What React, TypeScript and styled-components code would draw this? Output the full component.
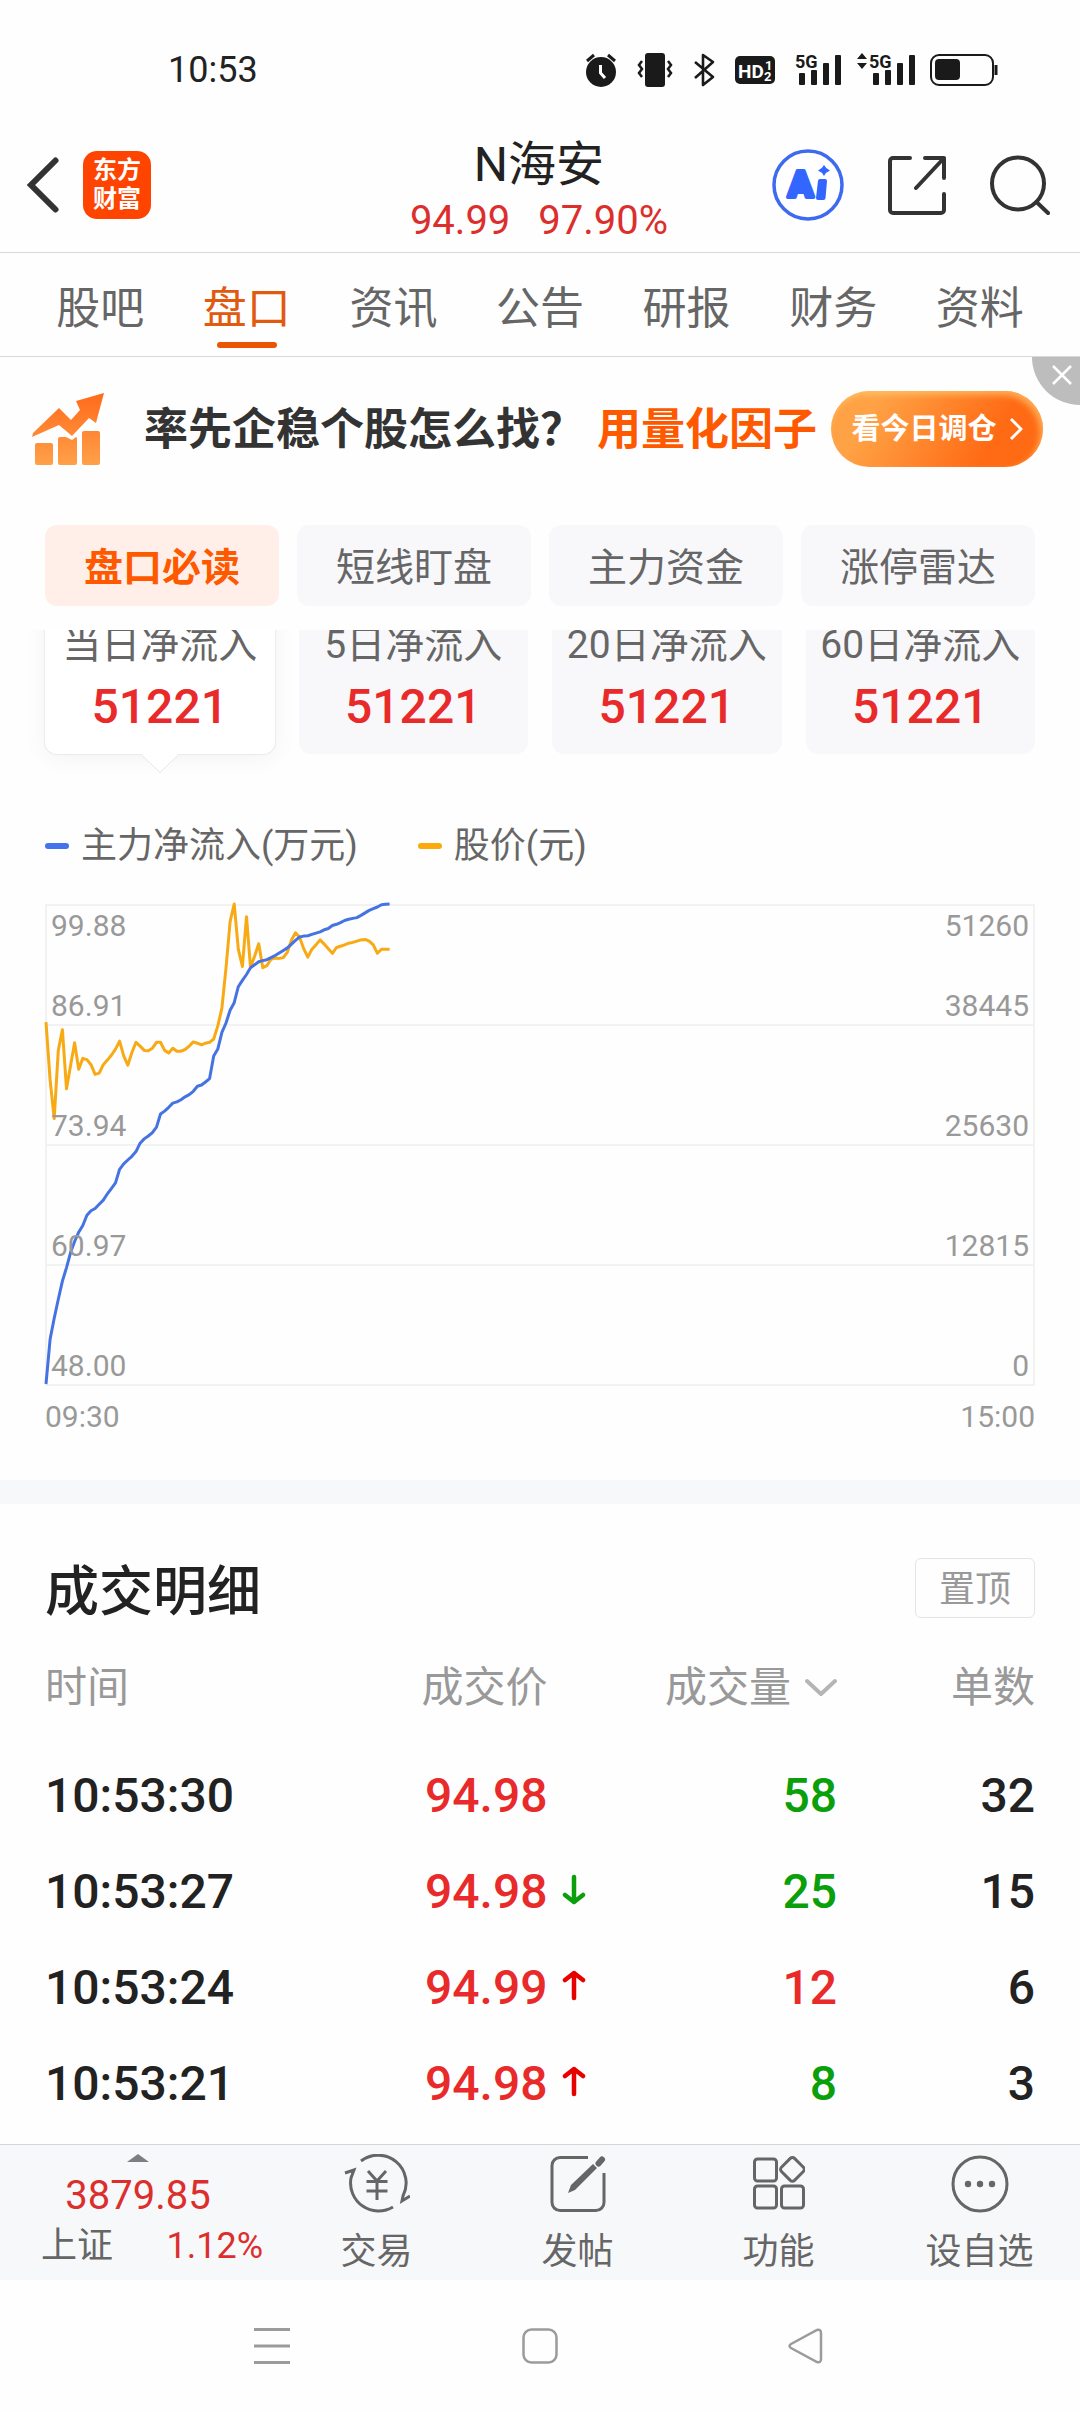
import React from 'react';
import styled, { createGlobalStyle } from 'styled-components';

const GlobalStyle = createGlobalStyle`
  *, *::before, *::after { box-sizing: border-box; }
  body { margin: 0; background: #fefefe; }
  body, button { font-family: Roboto, 'Noto Sans CJK SC', sans-serif; }
  button { margin: 0; padding: 0; border: 0; background: none; color: inherit; cursor: pointer; }
  svg { display: block; flex: none; }
`;

const color = {
  ink: '#222',
  text: '#666',
  muted: '#999',
  red: '#e92a2a',
  deepRed: '#dc2f2d',
  green: '#0b9f0b',
  brand: '#ff5900',
  panel: '#f8f8fb',
  line: '#d9d9d9',
};

const Page = styled.div`
  display: flex;
  flex-direction: column;
  min-height: 100vh;
  color: ${color.ink};
`;

/* ---------- status bar ---------- */

const StatusBar = styled.div`
  display: flex;
  align-items: center;
  justify-content: space-between;
  height: 118px;
  padding: 22px 82px 0 168px;
  font-size: 36px;
  line-height: 48px;
`;

const StatusIcons = styled.div`
  display: flex;
  align-items: center;
  gap: 20px;
`;

const SignalGroup = styled.div`
  display: flex;
  align-items: center;
  gap: 14px;
`;

const AlarmIcon = () => (
  <svg width="32" height="36" viewBox="0 0 32 36" aria-label="闹钟">
    <circle cx="16" cy="20" r="15" fill="#1a1a1a" />
    <path d="M2 9 9 3M30 9 23 3" stroke="#1a1a1a" strokeWidth="3" />
    <path d="M15.500 13v8l4.500 5" fill="none" stroke="#fff" strokeWidth="3" />
  </svg>
);

const VibrateIcon = () => (
  <svg width="36" height="36" viewBox="0 0 36 36" aria-label="振动">
    <rect x="8" y="1" width="20" height="34" rx="3" fill="#1a1a1a" />
    <path d="M5 9 2 13l3 4-3 4 3 4M31 9l3 4-3 4 3 4-3 4" fill="none" stroke="#1a1a1a" strokeWidth="2.500" />
  </svg>
);

const BluetoothIcon = () => (
  <svg width="22" height="36" viewBox="0 0 22 36" aria-label="蓝牙">
    <path d="M2 10 20 25 10 33V3L20 10 2 26" fill="none" stroke="#1a1a1a" strokeWidth="2.600" strokeLinejoin="round" />
  </svg>
);

const HdIcon = () => (
  <svg width="40" height="28" viewBox="0 0 40 28">
    <rect width="40" height="28" rx="5" fill="#1a1a1a" />
    <g fill="#fff" fontFamily="Roboto, sans-serif" fontWeight="700">
      <text x="3" y="22" fontSize="19">HD</text>
      <text x="30" y="14" fontSize="13">1</text>
      <text x="29" y="25" fontSize="13">2</text>
    </g>
  </svg>
);

const SignalIcon = ({ arrows }: { arrows?: boolean }) => (
  <svg width={arrows ? 60 : 47} height="36" viewBox={arrows ? '-13 0 60 36' : '0 0 47 36'} overflow="visible">
    {arrows && <path d="M-7 1-12 7h10zM-7 17-12 11h10z" fill="#1a1a1a" />}
    <text x="0" y="16" fontSize="18" fontWeight="700" fontFamily="Roboto, sans-serif" fill="#1a1a1a">5G</text>
    <g fill="#1a1a1a">
      <rect x="4" y="21" width="6" height="12" rx="1" />
      <rect x="16" y="18" width="6" height="15" rx="1" />
      <rect x="28" y="11" width="6" height="22" rx="1" />
      <rect x="40" y="3" width="6" height="30" rx="1" />
    </g>
  </svg>
);

const BatteryIcon = () => (
  <svg width="68" height="32" viewBox="0 0 68 32" aria-label="电量">
    <rect x="1" y="1" width="62" height="30" rx="8" fill="none" stroke="#1a1a1a" strokeWidth="2" />
    <rect x="5" y="5" width="25" height="21" rx="4" fill="#1a1a1a" />
    <path d="M66 11v10" stroke="#1a1a1a" strokeWidth="3" />
  </svg>
);

/* ---------- header ---------- */

const Header = styled.header`
  display: grid;
  grid-template-columns: 1fr auto 1fr;
  align-items: center;
  height: 135px;
  padding: 0 30px 0 26px;
  border-bottom: 1px solid ${color.line};
`;

const HeaderSide = styled.div<{ $end?: boolean }>`
  display: flex;
  align-items: center;
  gap: ${(p) => (p.$end ? 44 : 23)}px;
  justify-content: ${(p) => (p.$end ? 'flex-end' : 'flex-start')};
`;

const BrandLogo = styled.a`
  display: flex;
  flex-wrap: wrap;
  align-content: center;
  justify-content: center;
  width: 68px;
  height: 68px;
  border-radius: 14px;
  background: #ff4400;
  color: #fff;
  font-size: 24px;
  font-weight: 700;
  line-height: 29px;
  text-decoration: none;
`;

const StockTitle = styled.div`
  padding: 12px 0 0 2px;
  text-align: center;
`;

const StockName = styled.h1`
  margin: 0;
  font-size: 48px;
  font-weight: 400;
  line-height: 60px;
`;

const StockQuote = styled.div`
  display: flex;
  gap: 28px;
  font-size: 40px;
  line-height: 52px;
  color: ${color.deepRed};
`;

/* ---------- tabs ---------- */

const TabBar = styled.nav`
  display: flex;
  height: 104px;
  padding: 0 27px;
  border-bottom: 1px solid ${color.line};
`;

const Tab = styled.button<{ $active?: boolean }>`
  display: flex;
  flex: 1;
  flex-direction: column;
  align-items: center;
  padding-top: 26px;
  font-size: 44px;
  line-height: 60px;
  color: ${(p) => (p.$active ? '#e05a10' : color.text)};

  &::after {
    content: '';
    width: 60px;
    height: 6px;
    margin-top: 3px;
    border-radius: 3px;
    background: ${(p) => (p.$active ? '#ea5504' : 'transparent')};
  }
`;

/* ---------- promo banner ---------- */

const Banner = styled.aside`
  position: relative;
  display: flex;
  align-items: center;
  height: 144px;
  padding: 0 37px 0 32px;
  font-size: 44px;
  font-weight: 700;
  line-height: 60px;
  color: #333;
`;

const BannerQuestion = styled.span`
  margin-left: 40px;
  padding-top: 2px;
  white-space: nowrap;
`;

const BannerHighlight = styled.span`
  margin-left: 13px;
  padding-top: 2px;
  color: ${color.brand};
  white-space: nowrap;
`;

const BannerAction = styled.button`
  display: flex;
  align-items: center;
  justify-content: center;
  gap: 12px;
  width: 212px;
  height: 76px;
  margin-left: auto;
  border-radius: 38px;
  background: linear-gradient(120deg, #ffa245 20%, #ff6a14 75%);
  box-shadow: inset -3px 4px 6px rgba(255, 200, 110, 0.7);
  color: #fff;
  font-size: 29px;
  font-weight: 700;
  line-height: 40px;
`;

const BannerClose = styled.button`
  position: absolute;
  top: 0;
  right: 0;
  display: flex;
  justify-content: flex-end;
  width: 48px;
  height: 48px;
  padding: 8px 8px 0 0;
  border-bottom-left-radius: 48px;
  background: #bdbdbd;
`;

/* ---------- flow section ---------- */

const ChipRow = styled.div`
  display: grid;
  grid-template-columns: repeat(4, 1fr);
  gap: 18px;
  padding: 24px 45px;
`;

const Chip = styled.button<{ $active?: boolean }>`
  height: 81px;
  padding-top: 4px;
  border-radius: 12px;
  background: ${(p) => (p.$active ? '#ffefe8' : color.panel)};
  color: ${(p) => (p.$active ? color.brand : color.text)};
  font-size: 39px;
  font-weight: ${(p) => (p.$active ? 700 : 400)};
  line-height: 48px;
`;

const CardScroller = styled.div`
  display: grid;
  grid-template-columns: repeat(4, 1fr);
  gap: 24px;
  overflow: hidden;
  padding: 0 45px 68px;
`;

const FlowCard = styled.button<{ $active?: boolean }>`
  position: relative;
  display: flex;
  flex-direction: column;
  align-items: center;
  gap: 8px;
  margin-top: -24px;
  padding: 15px 0 17px;
  border-radius: 12px;
  background: ${(p) => (p.$active ? '#fff' : color.panel)};
  box-shadow: ${(p) => (p.$active ? '0 0 0 1px #ebebeb, 0 4px 24px rgba(0, 0, 0, 0.05)' : 'none')};
`;

const FlowLabel = styled.span`
  font-size: 39px;
  line-height: 48px;
  color: ${color.text};
  white-space: nowrap;
`;

const FlowValue = styled.span`
  font-size: 48px;
  font-weight: 500;
  line-height: 60px;
  color: ${color.red};
`;

const CardPointer = styled.svg`
  position: absolute;
  top: 100%;
  left: 50%;
  margin-left: -19px;
`;

const Legend = styled.div`
  display: flex;
  gap: 60px;
  padding: 0 45px;
`;

const LegendItem = styled.span<{ $color: string }>`
  display: flex;
  align-items: center;
  gap: 12px;
  font-size: 36px;
  line-height: 48px;
  color: ${color.text};

  &::before {
    content: '';
    width: 24px;
    height: 6px;
    border-radius: 3px;
    background: ${(p) => p.$color};
  }
`;

const Chart = styled.div`
  position: relative;
  margin: 34px 45px 0;
  border: 2px solid #f2f2f3;
  border-width: 0 2px 2px;
  font-size: 30px;
  line-height: 36px;
  color: ${color.muted};
`;

const ChartBand = styled.div`
  display: flex;
  flex-direction: column;
  justify-content: flex-end;
  height: 120px;
  padding: 2px 4px 0;
  border-top: 2px solid #f2f2f3;
`;

const AxisPair = styled.div<{ $top?: boolean }>`
  position: relative;
  z-index: 1;
  display: flex;
  justify-content: space-between;
  margin-bottom: ${(p) => (p.$top ? 'auto' : '0')};
`;

const ChartLines = styled.svg`
  position: absolute;
  top: 0;
  left: -2px;
  width: calc(100% + 4px);
  height: 100%;
  overflow: visible;
`;

const TimeAxis = styled.div`
  display: flex;
  justify-content: space-between;
  padding: 13px 45px 45px;
  font-size: 30px;
  line-height: 36px;
  color: ${color.muted};
`;

/* ---------- trades ---------- */

const Divider = styled.div`
  height: 24px;
  background: #f7f8fa;
`;

const Trades = styled.section`
  flex: 1;
  padding: 45px 45px 12px;
`;

const TradesHead = styled.div`
  display: flex;
  align-items: center;
  justify-content: space-between;
`;

const TradesTitle = styled.h2`
  margin: 0;
  padding-top: 10px;
  font-size: 54px;
  font-weight: 500;
  line-height: 68px;
`;

const PinButton = styled.button`
  width: 120px;
  height: 60px;
  padding-top: 4px;
  border: 1px solid #e4e4e4;
  border-radius: 6px;
  color: ${color.muted};
  font-size: 36px;
  line-height: 48px;
`;

const TradeTable = styled.table`
  width: 100%;
  border-collapse: collapse;
  table-layout: fixed;
`;

const HeadCell = styled.th<{ $width: number; $left?: boolean }>`
  width: ${(p) => p.$width}%;
  height: 120px;
  padding: 2px 0 0;
  color: ${color.muted};
  font-size: 42px;
  font-weight: 400;
  line-height: 54px;
  text-align: ${(p) => (p.$left ? 'left' : 'right')};
`;

const Cell = styled.td<{ $color?: string; $left?: boolean }>`
  height: 96px;
  padding: 2px 0 0;
  color: ${(p) => p.$color ?? color.ink};
  font-size: 48px;
  font-weight: 500;
  line-height: 60px;
  text-align: ${(p) => (p.$left ? 'left' : 'right')};
`;

const WithIcon = styled.span`
  display: flex;
  align-items: center;
  justify-content: flex-end;
  gap: 14px;
  padding-right: 4px;
`;

const IconSlot = styled.span`
  width: 24px;
`;

const SortButton = styled.button`
  display: inline-flex;
  align-items: center;
  gap: 14px;
  font-size: 42px;
  line-height: 54px;
`;

/* ---------- bottom bars ---------- */

const BottomBar = styled.footer`
  display: flex;
  height: 136px;
  border-top: 1px solid #d2d5da;
  background: #f7f8fa;
  color: ${color.text};
`;

const IndexPanel = styled.button`
  display: flex;
  flex-direction: column;
  align-items: center;
  width: 276px;
  padding-top: 9px;
  font-size: 36px;
  line-height: 48px;
`;

const IndexValue = styled.span`
  margin-top: 8px;
  font-size: 40px;
  line-height: 52px;
  color: ${color.deepRed};
`;

const IndexRow = styled.span`
  display: flex;
  align-self: flex-end;
  justify-content: space-between;
  width: 222px;
  margin-right: 13px;
`;

const IndexChange = styled.span`
  color: ${color.deepRed};
`;

const BarItem = styled.button`
  display: flex;
  flex: 1;
  flex-direction: column;
  align-items: center;
  gap: 14px;
  padding-top: 9px;
  font-size: 36px;
  line-height: 48px;
`;

const SystemNav = styled.div`
  display: grid;
  grid-template-columns: repeat(3, 1fr);
  height: 132px;
  padding: 0 138px;
`;

const SystemButton = styled.button`
  display: flex;
  align-items: center;
  justify-content: center;
`;

/* ---------- data ---------- */

const tabs = ['股吧', '盘口', '资讯', '公告', '研报', '财务', '资料'];
const chips = ['盘口必读', '短线盯盘', '主力资金', '涨停雷达'];
const flows = ['当日净流入', '5日净流入', '20日净流入', '60日净流入'];

const axis = [
  ['86.91', '38445'],
  ['73.94', '25630'],
  ['60.97', '12815'],
  ['48.00', '0'],
];

// One value per trading minute, starting at 09:30.
const prices = [
  87.11, 80.87, 76.68, 84.06, 86.29, 79.91, 82.37, 84.88, 82.01, 83.19, 83.06, 82.51, 81.46, 81.6,
  82.51, 83.01, 83.56, 84.2, 85.06, 83.47, 82.46, 83.83, 84.93, 84.52, 84.06, 84.02, 84.29, 84.93,
  84.93, 84.06, 83.79, 84.29, 83.97, 83.97, 84.15, 84.52, 84.97, 84.84, 84.65, 84.84, 84.93, 85.29,
  86.7, 88.62, 92.95, 97.97, 99.88, 95.0, 93.13, 98.51, 93.04, 94.23, 95.59, 93.0, 93.22, 93.91,
  94.04, 94.0, 94.09, 94.68, 96.0, 96.78, 96.28, 95.05, 94.14, 95.0, 95.46, 96.0, 95.55, 95.05,
  94.55, 95.18, 95.32, 95.46, 95.64, 95.73, 95.87, 96.0, 96.05, 95.87, 95.46, 94.55, 95.0, 95.0, 95.0,
];

const inflow = [
  0, 4770, 7030, 9050, 10990, 12430, 14010, 15220, 16210, 16930, 18020, 18510, 18740, 19190,
  19640, 20310, 20900, 21480, 22930, 23510, 23920, 24320, 24820, 25720, 26170, 26480, 26840, 27430,
  28830, 29140, 29550, 30000, 30130, 30360, 30670, 30900, 31260, 31800, 31930, 32250, 32610, 35040,
  35760, 37560, 38550, 39910, 40720, 42430, 43100, 43730, 44450, 44770, 45090, 45220, 45310, 45540,
  45760, 46030, 46300, 46570, 46980, 47380, 47740, 47830, 47880, 48010, 48150, 48280, 48510, 48640,
  48960, 49090, 49270, 49500, 49630, 49720, 49810, 50040, 50310, 50580, 50760, 50940, 51180, 51240, 51260,
];

const SESSION_POINTS = 242;
const plot = (values: number[], low: number, high: number) =>
  values
    .map((v, i) => {
      const x = 1 + (i * 990) / SESSION_POINTS;
      const y = 480 - ((v - low) / (high - low)) * 480;
      return `${x.toFixed(1)},${y.toFixed(1)}`;
    })
    .join(' ');

type Trade = { time: string; price: string; move?: 'up' | 'down'; volume: string; buy?: boolean; count: string };

const trades: Trade[] = [
  { time: '10:53:30', price: '94.98', volume: '58', count: '32' },
  { time: '10:53:27', price: '94.98', move: 'down', volume: '25', count: '15' },
  { time: '10:53:24', price: '94.99', move: 'up', volume: '12', buy: true, count: '6' },
  { time: '10:53:21', price: '94.98', move: 'up', volume: '8', count: '3' },
];

const MoveArrow = ({ move }: { move: 'up' | 'down' }) => (
  <svg width="24" height="36" viewBox="0 0 24 36" aria-label={move === 'up' ? '上涨' : '下跌'}>
    <path
      d={move === 'up' ? 'M12 28V3M3 10l9-7 9 7' : 'M12 3v25M3 21l9 7 9-7'}
      fill="none"
      stroke={move === 'up' ? '#e60000' : color.green}
      strokeWidth="4.500"
      strokeLinecap="round"
      strokeLinejoin="round"
    />
  </svg>
);

const iconStroke = { fill: 'none', stroke: '#666', strokeWidth: 3 };

const barItems = [
  {
    label: '交易',
    icon: (
      <svg width="66" height="60" viewBox="0 0 66 60" {...iconStroke}>
        <path d="M17 7a28 28 0 0 1 42 35l-1 5 8-5M49 53A28 28 0 0 1 7 24l3-8-9 3" />
        <path d="M24 17l9 10 9-10M33 27v19M22.500 27.500h21M22.500 37h21" />
      </svg>
    ),
  },
  {
    label: '发帖',
    icon: (
      <svg width="56" height="60" viewBox="0 0 56 60" {...iconStroke}>
        <path d="M38 3.500H10a8 8 0 0 0-8 8v37a8 8 0 0 0 8 8h36a8 8 0 0 0 8-8V19" />
        <path d="M18 39l3-8 22-21 4 4-22 22z" fill="#666" stroke="none" />
        <path d="M48.500 9.500 52 5.500" strokeWidth="6" strokeLinecap="round" />
      </svg>
    ),
  },
  {
    label: '功能',
    icon: (
      <svg width="52" height="60" viewBox="0 0 52 60" {...iconStroke}>
        <rect x="1.500" y="5" width="22" height="22" rx="3" />
        <rect x="1.500" y="32" width="22" height="22" rx="3" />
        <rect x="28.500" y="32" width="22" height="22" rx="3" />
        <rect x="30" y="6" width="18.500" height="18.500" rx="3" transform="rotate(45 39.200 15.500)" />
      </svg>
    ),
  },
  {
    label: '设自选',
    icon: (
      <svg width="60" height="60" viewBox="0 0 60 60" {...iconStroke}>
        <circle cx="30" cy="30" r="27" />
        <g fill="#666" stroke="none">
          <circle cx="18" cy="30" r="3.200" />
          <circle cx="30" cy="30" r="3.200" />
          <circle cx="42" cy="30" r="3.200" />
        </g>
      </svg>
    ),
  },
];

export default function App() {
  return (
    <Page>
      <GlobalStyle />
      <StatusBar>
        <time>10:53</time>
        <StatusIcons>
          <AlarmIcon />
          <VibrateIcon />
          <BluetoothIcon />
          <HdIcon />
          <SignalGroup>
            <SignalIcon />
            <SignalIcon arrows />
            <BatteryIcon />
          </SignalGroup>
        </StatusIcons>
      </StatusBar>

      <Header>
        <HeaderSide>
          <button aria-label="返回">
            <svg width="34" height="60" viewBox="0 0 34 60">
              <path d="M29.500 5.500 5 30l24.500 24.500" fill="none" stroke="#333" strokeWidth="6" strokeLinecap="round" />
            </svg>
          </button>
          <BrandLogo href="#home">
            <span>东方</span>
            <span>财富</span>
          </BrandLogo>
        </HeaderSide>
        <StockTitle>
          <StockName>N海安</StockName>
          <StockQuote>
            <span>94.99</span>
            <span>97.90%</span>
          </StockQuote>
        </StockTitle>
        <HeaderSide $end>
          <button aria-label="Ai">
            <svg width="72" height="74" viewBox="0 0 72 74">
              <circle cx="36" cy="37" r="34" fill="#fff" stroke="#3d6bf0" strokeWidth="3.500" />
              <g fill="#3366ff" stroke="#3366ff" strokeWidth="4" strokeLinejoin="round">
                <text x="16" y="49" fontSize="37" fontFamily="Roboto, sans-serif" fontWeight="900">A</text>
                <path d="M48 33h5l-1.500 17h-5.500z" />
              </g>
              <path d="M52 17q2 4 6 5.500-4 1.500-6 5.500-2-4-6-5.500 4-1.500 6-5.500z" fill="#3366ff" />
            </svg>
          </button>
          <button aria-label="分享">
            <svg width="58" height="60" viewBox="0 0 58 60" fill="none" stroke="#333" strokeWidth="4" strokeLinecap="round" strokeLinejoin="round">
              <path d="M22 3H5a3 3 0 0 0-3 3v49a3 3 0 0 0 3 3h48a3 3 0 0 0 3-3V39M37 3h19v20M56 3 28 33" />
            </svg>
          </button>
          <button aria-label="搜索">
            <svg width="60" height="60" viewBox="0 0 60 60" fill="none" stroke="#333" strokeWidth="4" strokeLinecap="round">
              <circle cx="28" cy="28.500" r="26" />
              <path d="M46.500 47 58 58" />
            </svg>
          </button>
        </HeaderSide>
      </Header>

      <TabBar>
        {tabs.map((t) => (
          <Tab key={t} $active={t === '盘口'}>
            {t}
          </Tab>
        ))}
      </TabBar>

      <Banner>
        <svg width="72" height="72" viewBox="0 0 72 72">
          <defs>
            <linearGradient id="rise" x1="0" y1="0" x2="0" y2="1">
              <stop offset="0" stopColor="#ff6a1a" />
              <stop offset="1" stopColor="#ffa04a" />
            </linearGradient>
          </defs>
          <path
            d="M0 44 1 40 27 15 39 27 48 17 44 8 72 0 64 30 57 25 40 43 27 32ZM5 50h14q2 0 2 2v18q0 2-2 2H5q-2 0-2-2V52q0-2 2-2ZM28 44h6l6 3 4-3q1 0 1 2v24q0 2-2 2H28q-2 0-2-2V46q0-2 2-2ZM52 38h14q2 0 2 2v30q0 2-2 2H52q-2 0-2-2V40q0-2 2-2Z"
            fill="url(#rise)"
          />
        </svg>
        <BannerQuestion>率先企稳个股怎么找？</BannerQuestion>
        <BannerHighlight>用量化因子</BannerHighlight>
        <BannerAction>
          看今日调仓
          <svg width="14" height="24" viewBox="0 0 14 24">
            <path d="M2 2l10 10L2 22" fill="none" stroke="#fff" strokeWidth="3" />
          </svg>
        </BannerAction>
        <BannerClose aria-label="关闭">
          <svg width="20" height="20" viewBox="0 0 20 20">
            <path d="M1 1l18 18M19 1 1 19" stroke="#fff" strokeWidth="2.500" />
          </svg>
        </BannerClose>
      </Banner>

      <ChipRow>
        {chips.map((c, i) => (
          <Chip key={c} $active={i === 0}>
            {c}
          </Chip>
        ))}
      </ChipRow>

      <CardScroller>
        {flows.map((label, i) => (
          <FlowCard key={label} $active={i === 0}>
            <FlowLabel>{label}</FlowLabel>
            <FlowValue>51221</FlowValue>
            {i === 0 && (
              <CardPointer width="38" height="20" viewBox="0 0 38 20">
                <path d="M0 0 19 18 38 0" fill="#fff" />
                <path d="M0 0.500 19 18.500 38 0.500" fill="none" stroke="#e6e6e6" />
              </CardPointer>
            )}
          </FlowCard>
        ))}
      </CardScroller>

      <Legend>
        <LegendItem $color="#4573ec">主力净流入(万元)</LegendItem>
        <LegendItem $color="#fca90c">股价(元)</LegendItem>
      </Legend>

      <Chart>
        <ChartLines viewBox="0 0 990 480" preserveAspectRatio="none" fill="none" strokeWidth="3" strokeLinejoin="round">
          <polyline points={plot(prices, 48, 99.88)} stroke="#f7aa14" />
          <polyline points={plot(inflow, 0, 51260)} stroke="#4673e2" />
        </ChartLines>
        {axis.map(([left, right], i) => (
          <ChartBand key={left}>
            {i === 0 && (
              <AxisPair $top>
                <span>99.88</span>
                <span>51260</span>
              </AxisPair>
            )}
            <AxisPair>
              <span>{left}</span>
              <span>{right}</span>
            </AxisPair>
          </ChartBand>
        ))}
      </Chart>
      <TimeAxis>
        <span>09:30</span>
        <span>15:00</span>
      </TimeAxis>

      <Divider />

      <Trades>
        <TradesHead>
          <TradesTitle>成交明细</TradesTitle>
          <PinButton>置顶</PinButton>
        </TradesHead>
        <TradeTable>
          <thead>
            <tr>
              <HeadCell $width={25} $left>时间</HeadCell>
              <HeadCell $width={30}>
                <WithIcon>
                  成交价
                  <IconSlot />
                </WithIcon>
              </HeadCell>
              <HeadCell $width={25}>
                <SortButton>
                  成交量
                  <svg width="32" height="20" viewBox="0 0 32 20">
                    <path d="M2 3l14 13L30 3" fill="none" stroke="#b5b5b5" strokeWidth="4" strokeLinecap="round" strokeLinejoin="round" />
                  </svg>
                </SortButton>
              </HeadCell>
              <HeadCell $width={20}>单数</HeadCell>
            </tr>
          </thead>
          <tbody>
            {trades.map((t) => (
              <tr key={t.time}>
                <Cell $left>{t.time}</Cell>
                <Cell $color={color.red}>
                  <WithIcon>
                    {t.price}
                    <IconSlot>{t.move && <MoveArrow move={t.move} />}</IconSlot>
                  </WithIcon>
                </Cell>
                <Cell $color={t.buy ? color.red : color.green}>{t.volume}</Cell>
                <Cell>{t.count}</Cell>
              </tr>
            ))}
          </tbody>
        </TradeTable>
      </Trades>

      <BottomBar>
        <IndexPanel>
          <svg width="22" height="8" viewBox="0 0 22 8">
            <path d="M0 8 11 0l11 8z" fill="#7d7d82" />
          </svg>
          <IndexValue>3879.85</IndexValue>
          <IndexRow>
            <span>上证</span>
            <IndexChange>1.12%</IndexChange>
          </IndexRow>
        </IndexPanel>
        {barItems.map((item) => (
          <BarItem key={item.label}>
            {item.icon}
            {item.label}
          </BarItem>
        ))}
      </BottomBar>

      <SystemNav>
        <SystemButton aria-label="最近任务">
          <svg width="36" height="38" viewBox="0 0 36 38">
            <path d="M0 2.500h36M0 19h36M0 35.500h36" stroke="#9b9b9b" strokeWidth="3" />
          </svg>
        </SystemButton>
        <SystemButton aria-label="主屏幕">
          <svg width="36" height="36" viewBox="0 0 36 36">
            <rect x="1.500" y="1.500" width="33" height="33" rx="8" fill="none" stroke="#9b9b9b" strokeWidth="2.500" />
          </svg>
        </SystemButton>
        <SystemButton aria-label="返回上一级">
          <svg width="40" height="36" viewBox="0 0 40 36">
            <path d="M3 16 29 2q4-1 4 3v26q0 4-4 3L3 20q-3-2 0-4z" fill="none" stroke="#9b9b9b" strokeWidth="2.500" />
          </svg>
        </SystemButton>
      </SystemNav>
    </Page>
  );
}
